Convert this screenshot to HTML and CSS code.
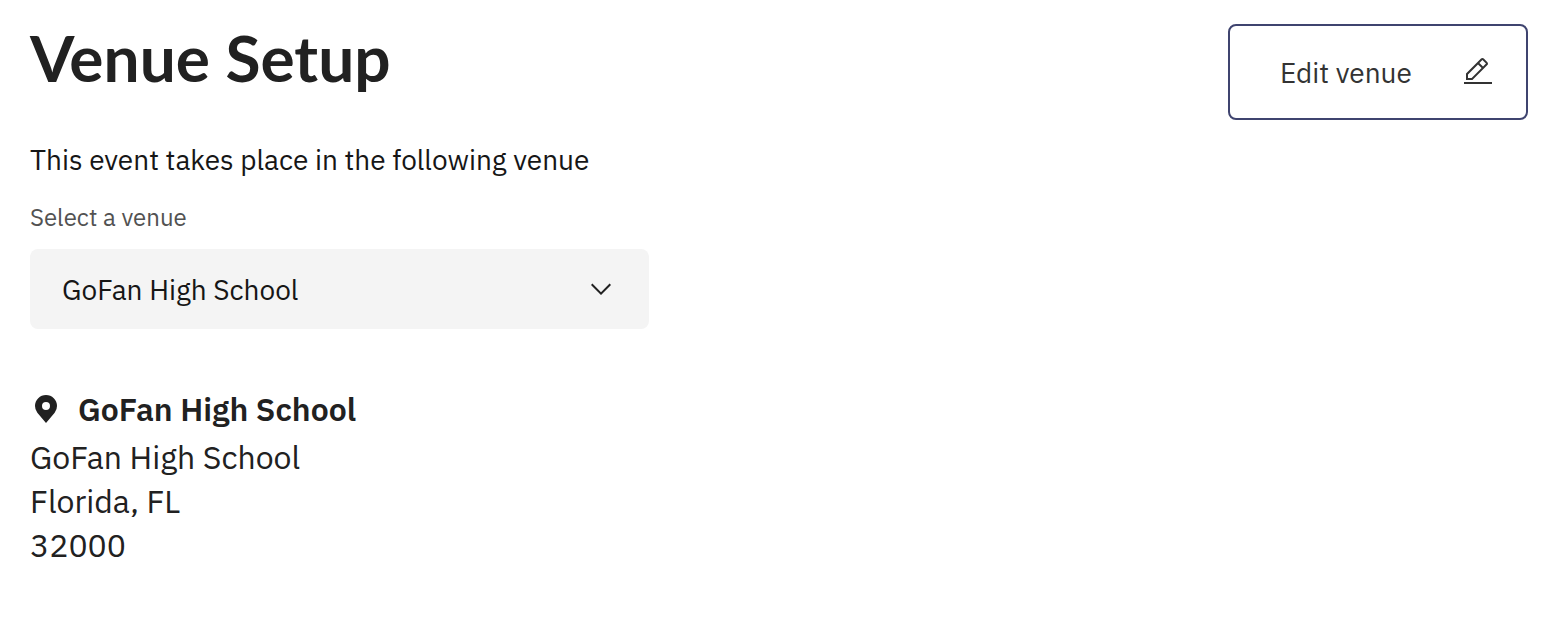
FILE: index.html
```html
<!DOCTYPE html>
<html lang="en">
<head>
<meta charset="utf-8">
<meta name="viewport" content="width=device-width, initial-scale=1">
<title>Venue Setup</title>
<link rel="stylesheet" href="styles.css">
</head>
<body>
<main class="page">
  <section class="venue">
    <h1 class="title">Venue Setup</h1>
    <p class="intro">This event takes place in the following venue</p>
    <label class="field-label" for="venue">Select a venue</label>
    <div class="select">
      <select class="select-input" id="venue">
        <option>GoFan High School</option>
      </select>
      <svg class="icon select-icon" viewBox="0 0 16 16" aria-hidden="true"><path d="M8 11L3 6l.7-.7L8 9.6l4.3-4.3.7.7z"/></svg>
    </div>
    <h2 class="venue-name">
      <svg class="icon" viewBox="0 0 32 32" aria-hidden="true"><path d="M16 2A11.013 11.013 0 0 0 5 13a10.889 10.889 0 0 0 2.216 6.6s.3.395.349.452L16 30l8.439-9.953c.044-.053.345-.447.345-.447A10.885 10.885 0 0 0 27 13 11.013 11.013 0 0 0 16 2Zm0 15a4 4 0 1 1 4-4 4.005 4.005 0 0 1-4 4Z"/></svg>
      GoFan High School
    </h2>
    <address class="address">
      <span>GoFan High School</span>
      <span>Florida, FL</span>
      <span>32000</span>
    </address>
  </section>
  <button class="edit" type="button">
    Edit venue
    <svg class="icon" viewBox="0 0 32 32" aria-hidden="true"><path d="M2 26h28v2H2zM25.4 9c.8-.8.8-2 0-2.8l-3.6-3.6c-.8-.8-2-.8-2.8 0l-15 15V24h6.4l15-15zm-5-5L24 7.6l-3 3L17.4 7l3-3zM6 22v-3.6l10-10 3.6 3.6-10 10H6z"/></svg>
  </button>
</main>
</body>
</html>
```
FILE: styles.css
```css
* {
  box-sizing: border-box;
}

body {
  margin: 0;
  background: #fff;
  color: #212121;
  font-family: "IBM Plex Sans", "Open Sans", sans-serif;
}

.page {
  display: flex;
  justify-content: space-between;
  align-items: flex-start;
  gap: 32px;
  padding: 24px 28px 32px 30px;
}

.venue {
  flex: 1;
}

.title {
  margin: 0 0 48px;
  font: 700 64px/68px Lato, sans-serif;
}

.intro {
  margin: 0 0 20px;
  color: #161616;
  font-size: 28px;
  line-height: 40px;
}

.field-label {
  display: block;
  margin-bottom: 15px;
  color: #525252;
  font-size: 24px;
  line-height: 34px;
}

.select {
  position: relative;
  width: 100%;
  max-width: 619px;
  margin-bottom: 58px;
}

.select-input {
  display: block;
  width: 100%;
  height: 80px;
  padding: 0 72px 0 32px;
  border: 0;
  border-radius: 8px;
  background: #f4f4f4;
  color: #161616;
  font: inherit;
  font-size: 28px;
  appearance: none;
}

.select-icon {
  position: absolute;
  top: 24px;
  right: 32px;
  pointer-events: none;
}

.icon {
  flex: none;
  width: 32px;
  height: 32px;
  fill: currentColor;
}

.venue-name {
  display: flex;
  align-items: center;
  gap: 16px;
  margin: 0 0 4px;
  font-size: 32px;
  font-weight: 600;
  line-height: 44px;
}

.address {
  display: grid;
  font-size: 32px;
  font-style: normal;
  line-height: 44px;
}

.edit {
  display: flex;
  align-items: center;
  justify-content: space-between;
  width: 300px;
  height: 96px;
  padding: 0 32px 0 50px;
  border: 2px solid #3f446f;
  border-radius: 8px;
  background: #fff;
  color: #333;
  font: inherit;
  font-size: 28px;
}
```
